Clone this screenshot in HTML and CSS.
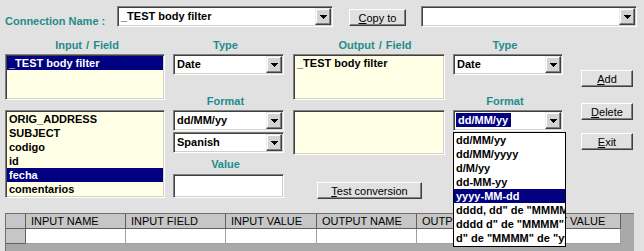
FILE: index.html
```html
<!DOCTYPE html>
<html>
<head>
<meta charset="utf-8">
<link rel="stylesheet" href="styles.css">
</head>
<body>
<div class="form">
  <div class="toprow">
    <span class="conn-label">Connection Name :</span>
    <div class="combo combo-conn"><span class="combo-text">_TEST body filter</span><span class="drop-btn"><svg width="7" height="4" viewBox="0 0 7 4" shape-rendering="crispEdges"><rect x="0" y="0" width="7" height="1"/><rect x="1" y="1" width="5" height="1"/><rect x="2" y="2" width="3" height="1"/><rect x="3" y="3" width="1" height="1"/></svg></span></div>
    <button class="btn btn-copy"><u>C</u>opy to</button>
    <div class="combo combo-target"><span class="combo-text"></span><span class="drop-btn"><svg width="7" height="4" viewBox="0 0 7 4" shape-rendering="crispEdges"><rect x="0" y="0" width="7" height="1"/><rect x="1" y="1" width="5" height="1"/><rect x="2" y="2" width="3" height="1"/><rect x="3" y="3" width="1" height="1"/></svg></span></div>
  </div>

  <div class="main">
    <div class="col col-a">
      <div class="lbl lbl-a">Input / Field</div>
      <div class="listbox lb-top"><div class="item sel">_TEST body filter</div></div>
      <div class="listbox lb-fields">
        <div class="item">ORIG_ADDRESS</div>
        <div class="item">SUBJECT</div>
        <div class="item">codigo</div>
        <div class="item">id</div>
        <div class="item sel">fecha</div>
        <div class="item">comentarios</div>
      </div>
    </div>

    <div class="col col-b">
      <div class="lbl lbl-b">Type</div>
      <div class="combo"><span class="combo-text">Date</span><span class="drop-btn"><svg width="7" height="4" viewBox="0 0 7 4" shape-rendering="crispEdges"><rect x="0" y="0" width="7" height="1"/><rect x="1" y="1" width="5" height="1"/><rect x="2" y="2" width="3" height="1"/><rect x="3" y="3" width="1" height="1"/></svg></span></div>
      <div class="lbl lbl-b lbl-format">Format</div>
      <div class="combo"><span class="combo-text">dd/MM/yy</span><span class="drop-btn"><svg width="7" height="4" viewBox="0 0 7 4" shape-rendering="crispEdges"><rect x="0" y="0" width="7" height="1"/><rect x="1" y="1" width="5" height="1"/><rect x="2" y="2" width="3" height="1"/><rect x="3" y="3" width="1" height="1"/></svg></span></div>
      <div class="combo combo-lang"><span class="combo-text">Spanish</span><span class="drop-btn"><svg width="7" height="4" viewBox="0 0 7 4" shape-rendering="crispEdges"><rect x="0" y="0" width="7" height="1"/><rect x="1" y="1" width="5" height="1"/><rect x="2" y="2" width="3" height="1"/><rect x="3" y="3" width="1" height="1"/></svg></span></div>
      <div class="lbl lbl-b lbl-value">Value</div>
      <div class="textbox"></div>
    </div>

    <div class="col col-c">
      <div class="lbl lbl-c">Output / Field</div>
      <div class="listbox lb-top"><div class="item">_TEST body filter</div></div>
      <div class="listbox lb-outfmt"></div>
      <button class="btn btn-test"><u>T</u>est conversion</button>
    </div>

    <div class="col col-d">
      <div class="lbl lbl-b">Type</div>
      <div class="combo"><span class="combo-text">Date</span><span class="drop-btn"><svg width="7" height="4" viewBox="0 0 7 4" shape-rendering="crispEdges"><rect x="0" y="0" width="7" height="1"/><rect x="1" y="1" width="5" height="1"/><rect x="2" y="2" width="3" height="1"/><rect x="3" y="3" width="1" height="1"/></svg></span></div>
      <div class="lbl lbl-b lbl-format">Format</div>
      <div class="combo"><span class="combo-text focus"><span class="hl">dd/MM/yy</span></span><span class="drop-btn"><svg width="7" height="4" viewBox="0 0 7 4" shape-rendering="crispEdges"><rect x="0" y="0" width="7" height="1"/><rect x="1" y="1" width="5" height="1"/><rect x="2" y="2" width="3" height="1"/><rect x="3" y="3" width="1" height="1"/></svg></span></div>
    </div>

    <div class="col col-e">
      <button class="btn btn-side btn-add"><u>A</u>dd</button>
      <button class="btn btn-side btn-del"><u>D</u>elete</button>
      <button class="btn btn-side btn-exit"><u>E</u>xit</button>
    </div>
  </div>

  <div class="datagrid">
    <div class="rh"></div>
    <div class="gh">INPUT NAME</div>
    <div class="gh">INPUT FIELD</div>
    <div class="gh">INPUT VALUE</div>
    <div class="gh">OUTPUT NAME</div>
    <div class="gh">OUTPUT FIELD</div>
    <div class="gh">OUTPUT VALUE</div>
    <div class="rh"></div>
    <div class="gc"></div>
    <div class="gc"></div>
    <div class="gc"></div>
    <div class="gc"></div>
    <div class="gc"></div>
    <div class="gc"></div>
  </div>

  <div class="dropdown">
    <div class="ditem">dd/MM/yy</div>
    <div class="ditem">dd/MM/yyyy</div>
    <div class="ditem">d/M/yy</div>
    <div class="ditem">dd-MM-yy</div>
    <div class="ditem sel">yyyy-MM-dd</div>
    <div class="ditem">dddd, dd" de "MMMM" de "yyyy</div>
    <div class="ditem">dddd d" de "MMMM" de "yyyy</div>
    <div class="ditem">d" de "MMMM" de "yyyy</div>
  </div>
</div>
</body>
</html>
```

FILE: styles.css
```css
* { box-sizing: border-box; }
html, body { margin: 0; padding: 0; }
body {
  width: 644px;
  height: 251px;
  overflow: hidden;
  background: #e1e1e1;
  font-family: "Liberation Sans", Arial, sans-serif;
  font-size: 11px;
  color: #000;
}
.form { position: relative; width: 644px; height: 251px; }

/* top row */
.toprow {
  display: flex;
  align-items: flex-start;
  height: 27px;
  padding: 6px 0 0 5px;
}
.conn-label {
  width: 112px;
  margin-top: 8px;
  line-height: 14px;
  color: #1f8c8c;
  font-weight: bold;
  white-space: nowrap;
}
.combo-conn { width: 216px; }
.btn-copy { margin: 3px 0 0 16px; width: 57px; }
.combo-target { width: 216px; margin-left: 15px; }

/* combos */
.combo {
  display: flex;
  height: 21px;
  background: #fff;
  border: 1px solid;
  border-color: #808080 #fff #fff #808080;
  box-shadow: inset 1px 1px #404040, inset -1px -1px #d4d0c8;
  padding: 1px;
}
.combo-text {
  flex: 1;
  padding-left: 2px;
  line-height: 17px;
  font-weight: bold;
  white-space: nowrap;
  overflow: hidden;
}
.combo-text.focus { padding-left: 1px; padding-top: 1px; line-height: 14px; }
.hl { display: inline-block; background: #000080; color: #fff; padding: 0 3px 0 2px; line-height: 14px; }
.drop-btn {
  width: 16px;
  height: 17px;
  background: #d4d4d4;
  border: 1px solid;
  border-color: #ececec #404040 #404040 #ececec;
  box-shadow: inset -1px -1px #808080, inset 1px 1px #fff;
  display: flex;
  align-items: center;
  justify-content: center;
}
.drop-btn svg { display: block; fill: #000; }

/* buttons */
.btn {
  display: block;
  height: 17px;
  padding: 0;
  background: #e1e1e1;
  border: 1px solid;
  border-color: #fff #404040 #404040 #fff;
  box-shadow: inset -1px -1px #808080;
  font-family: "Liberation Sans", Arial, sans-serif;
  font-size: 11px;
  line-height: 14px;
  color: #000;
  text-align: center;
}

/* main area */
.main { display: flex; padding-left: 5px; margin-top: 11px; align-items: flex-start; }
.col { display: flex; flex-direction: column; }
.col-a { width: 160px; margin-right: 8px; }
.col-b { width: 111px; margin-right: 9px; }
.col-c { width: 152px; margin-right: 8px; }
.col-d { width: 110px; margin-right: 18px; }
.col-e { width: 52px; }

.lbl {
  height: 14px;
  line-height: 14px;
  margin-bottom: 2px;
  text-align: center;
  color: #1f8c8c;
  font-weight: bold;
  white-space: nowrap;
}
.lbl-a { padding-left: 4px; word-spacing: 1px; }
.lbl-b { padding-right: 6px; }
.lbl-c { padding-left: 12px; word-spacing: 1px; }
.lbl-format { margin-top: 19px; }
.lbl-value { margin-top: 4px; margin-bottom: 3px; }
.combo-lang { margin-top: 1px; }

.listbox {
  background: #ffffe6;
  border: 1px solid;
  border-color: #808080 #fff #fff #808080;
  box-shadow: inset 1px 1px #404040, inset -1px -1px #d4d0c8;
  padding: 1px;
  overflow: hidden;
}
.lb-top { height: 46px; }
.lb-fields { height: 88px; margin-top: 10px; }
.lb-outfmt { height: 45px; margin-top: 10px; }
.item {
  height: 14px;
  line-height: 14px;
  padding-left: 2px;
  font-weight: bold;
  white-space: nowrap;
}
.item.sel { background: #000080; color: #fff; }

.textbox {
  height: 24px;
  background: #fff;
  border: 1px solid;
  border-color: #808080 #fff #fff #808080;
  box-shadow: inset 1px 1px #404040, inset -1px -1px #d4d0c8;
}

.btn-test { width: 105px; margin: 27px 0 0 24px; }
.btn-side { width: 52px; }
.btn-add { margin-top: 32px; }
.btn-del { margin-top: 16px; }
.btn-exit { margin-top: 13px; }

/* data grid */
.datagrid {
  margin: 14px 0 0 5px;
  width: 629px;
  height: 38px;
  background: #a9a9a9;
  border-top: 1px solid #6e6e6e;
  border-left: 1px solid #6e6e6e;
  overflow: hidden;
  display: grid;
  grid-template-columns: 20px 100px 100px 91px 100px 100px 104px;
  grid-template-rows: 15px 15px;
  align-content: start;
  justify-content: start;
}
.rh {
  background: #c6c6c6;
  border-right: 1px solid #606060;
  border-bottom: 1px solid #606060;
}
.gh {
  background: #c6c6c6;
  border-right: 1px solid #606060;
  border-bottom: 1px solid #606060;
  padding-left: 5px;
  line-height: 14px;
  white-space: nowrap;
  overflow: hidden;
}
.gc {
  background: #fff;
  border-right: 1px solid #a0a0a0;
  border-bottom: 1px solid #a0a0a0;
}

/* dropdown popup */
.dropdown {
  position: absolute;
  left: 453px;
  top: 132px;
  width: 113px;
  height: 115px;
  background: #fff;
  border: 1px solid #000;
  overflow: hidden;
}
.ditem {
  height: 14px;
  line-height: 14px;
  padding-left: 2px;
  font-weight: bold;
  white-space: nowrap;
}
.ditem.sel { background: #000080; color: #fff; }
```
